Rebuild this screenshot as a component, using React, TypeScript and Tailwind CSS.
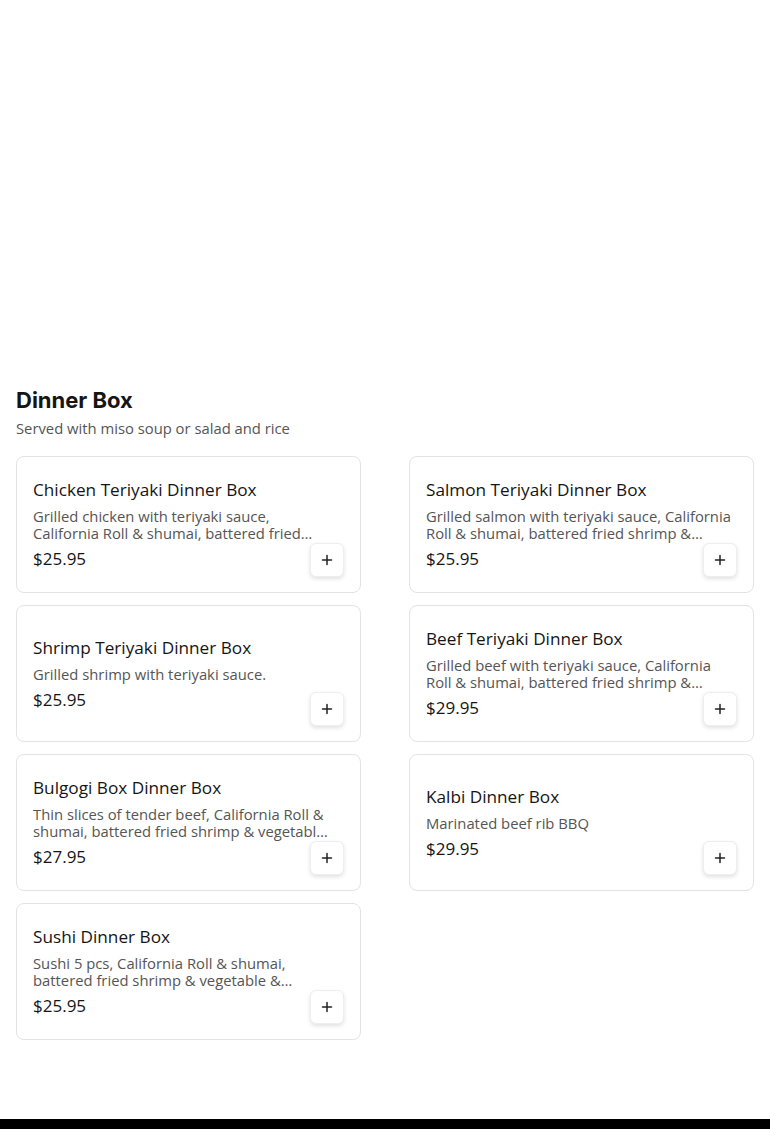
import React from "react";

type Item = { name: string; desc: string[]; price: string };

const left: Item[] = [
  { name: "Chicken Teriyaki Dinner Box", desc: ["Grilled chicken with teriyaki sauce,", "California Roll & shumai, battered fried…"], price: "$25.95" },
  { name: "Shrimp Teriyaki Dinner Box", desc: ["Grilled shrimp with teriyaki sauce."], price: "$25.95" },
  { name: "Bulgogi Box Dinner Box", desc: ["Thin slices of tender beef, California Roll &", "shumai, battered fried shrimp & vegetabl…"], price: "$27.95" },
  { name: "Sushi Dinner Box", desc: ["Sushi 5 pcs, California Roll & shumai,", "battered fried shrimp & vegetable &…"], price: "$25.95" },
];
const right: Item[] = [
  { name: "Salmon Teriyaki Dinner Box", desc: ["Grilled salmon with teriyaki sauce, California", "Roll & shumai, battered fried shrimp &…"], price: "$25.95" },
  { name: "Beef Teriyaki Dinner Box", desc: ["Grilled beef with teriyaki sauce, California", "Roll & shumai, battered fried shrimp &…"], price: "$29.95" },
  { name: "Kalbi Dinner Box", desc: ["Marinated beef rib BBQ"], price: "$29.95" },
];

const font = { fontFamily: '"Open Sans", "Noto Sans", sans-serif' };

function Card({ item }: { item: Item }) {
  return (
    <div className="relative h-[137px] rounded-lg border border-[#e3e3e3] bg-white pl-4 pr-6 flex flex-col justify-center">
      <div className="text-[17.2px] font-medium leading-[22px] text-[#151515] whitespace-nowrap">{item.name}</div>
      <div className="mt-[7px] text-[14.8px] leading-[17px] text-[#555]">
        {item.desc.map((l) => (
          <div key={l} className="whitespace-nowrap">{l}</div>
        ))}
      </div>
      <div className="mt-[6px] text-[17px] leading-[22px] text-[#151515]">{item.price}</div>
      <button className="absolute right-4 bottom-[15px] w-[34px] h-[34px] rounded-md bg-white border border-[#eee] shadow-[0_2px_4px_rgba(0,0,0,0.12)] flex items-center justify-center">
        <svg width="12" height="12" viewBox="0 0 12 12" fill="none" stroke="#222" strokeWidth="1.5" strokeLinecap="round">
          <path d="M6 1.5v9M1.5 6h9" />
        </svg>
      </button>
    </div>
  );
}

export default function App() {
  return (
    <div className="min-h-[1129px] bg-white flex flex-col" style={font}>
      <div className="h-[385px]" />
      <div className="px-4">
        <h2 className="text-[22px] font-bold leading-[30px] text-[#151515]" style={{ fontFamily: 'Inter, "Liberation Sans", sans-serif' }}>Dinner Box</h2>
        <p className="mt-[3px] text-[14.8px] leading-[20px] text-[#555]">Served with miso soup or salad and rice</p>
        <div className="mt-[18px] grid grid-cols-2 gap-x-12">
          <div className="flex flex-col gap-3">
            {left.map((it) => <Card key={it.name} item={it} />)}
          </div>
          <div className="flex flex-col gap-3">
            {right.map((it) => <Card key={it.name} item={it} />)}
          </div>
        </div>
      </div>
      <div className="flex-1 min-h-[79px]" />
      <div className="h-[10px] bg-black" />
    </div>
  );
}
